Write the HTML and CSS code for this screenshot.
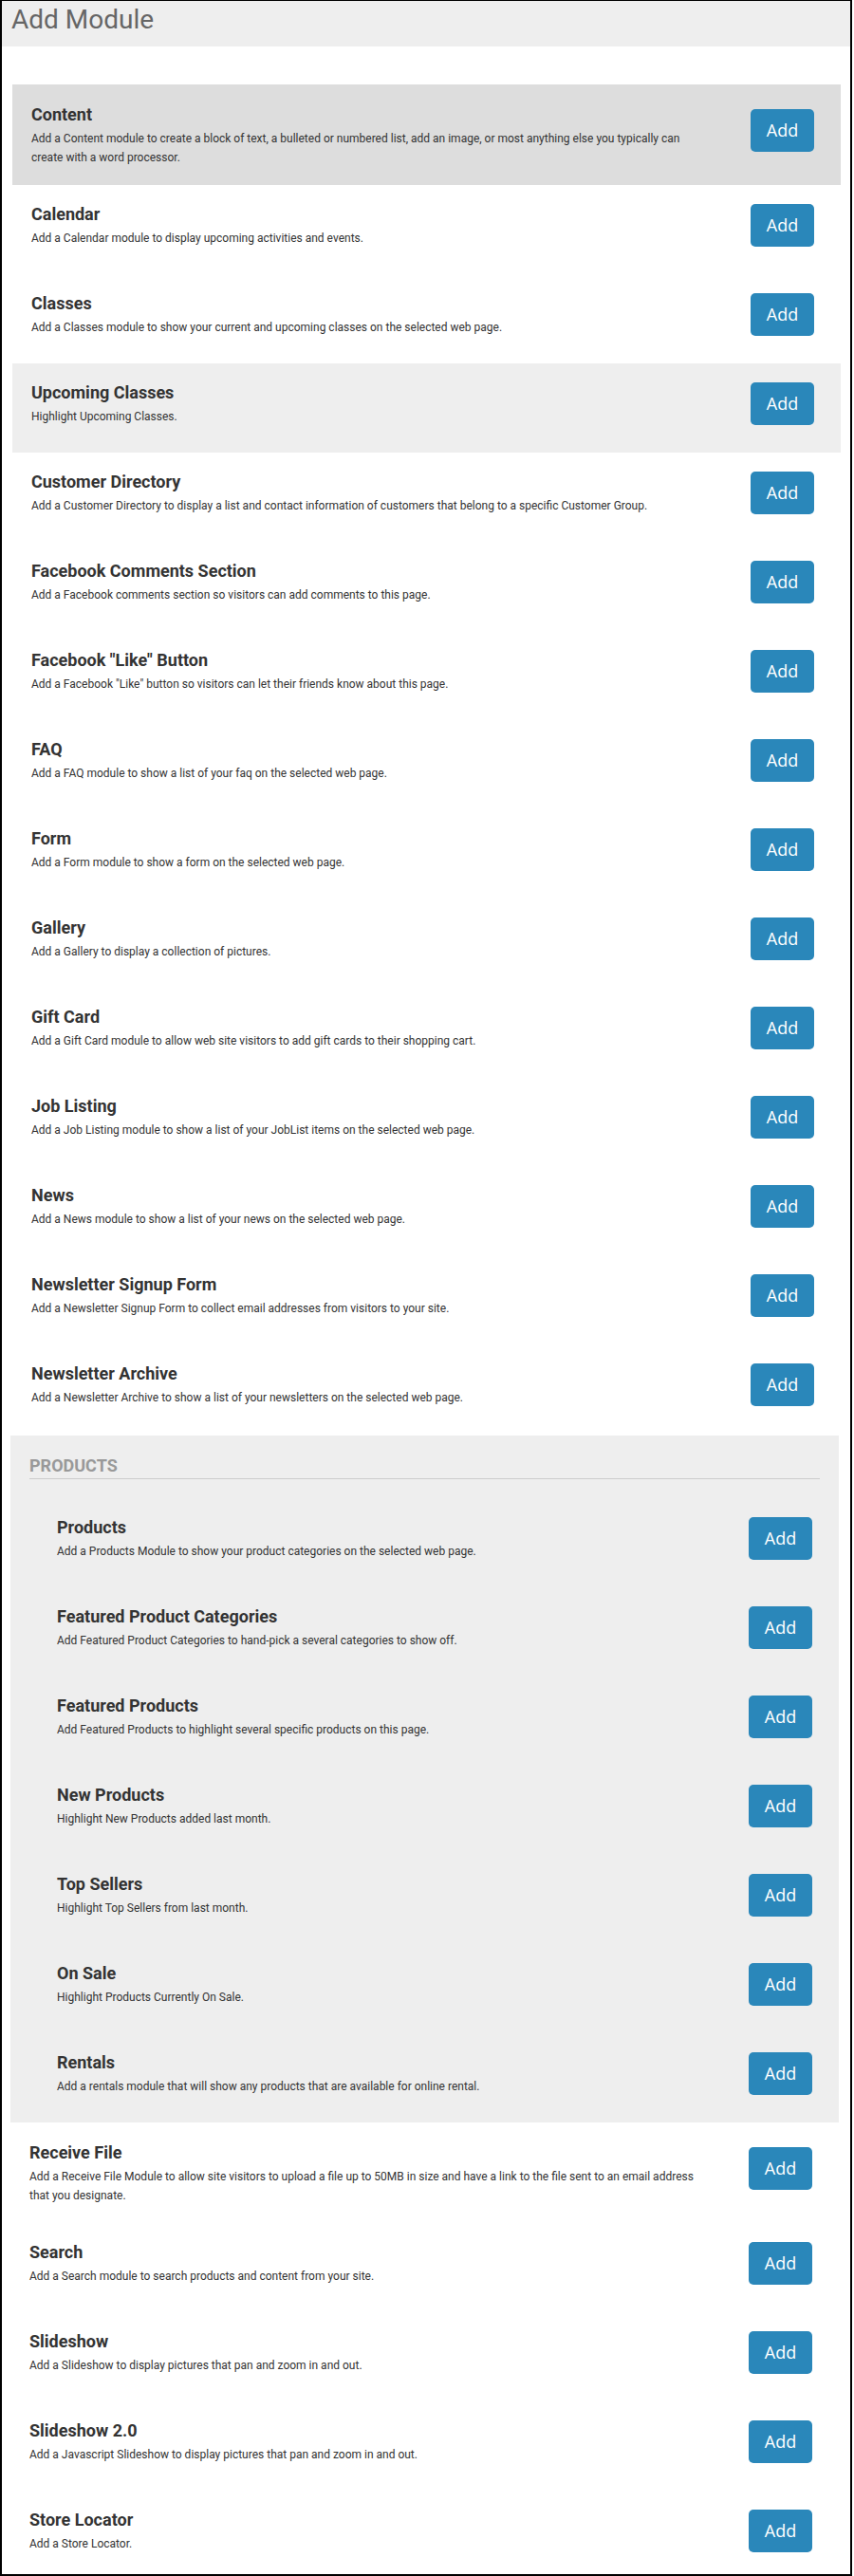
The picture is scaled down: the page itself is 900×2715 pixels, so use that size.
FILE: index.html
```html
<!DOCTYPE html>
<html lang="en">
<head>
<meta charset="utf-8">
<title>Add Module</title>
<link rel="stylesheet" href="styles.css">
</head>
<body>
<div class="frame">
  <header class="head"><h1 class="head-title">Add Module</h1></header>
  <main class="body">
    <div class="group">
      <div class="row row-dark row-tall">
        <div class="row-text">
          <h3 class="row-title">Content</h3>
          <p class="row-desc">Add a Content module to create a block of text, a bulleted or numbered list, add an image, or most anything else you typically can create with a word processor.</p>
        </div>
        <button class="add-btn">Add</button>
      </div>
      <div class="row">
        <div class="row-text"><h3 class="row-title">Calendar</h3><p class="row-desc">Add a Calendar module to display upcoming activities and events.</p></div>
        <button class="add-btn">Add</button>
      </div>
      <div class="row">
        <div class="row-text"><h3 class="row-title">Classes</h3><p class="row-desc">Add a Classes module to show your current and upcoming classes on the selected web page.</p></div>
        <button class="add-btn">Add</button>
      </div>
      <div class="row row-light">
        <div class="row-text"><h3 class="row-title">Upcoming Classes</h3><p class="row-desc">Highlight Upcoming Classes.</p></div>
        <button class="add-btn">Add</button>
      </div>
      <div class="row">
        <div class="row-text"><h3 class="row-title">Customer Directory</h3><p class="row-desc">Add a Customer Directory to display a list and contact information of customers that belong to a specific Customer Group.</p></div>
        <button class="add-btn">Add</button>
      </div>
      <div class="row">
        <div class="row-text"><h3 class="row-title">Facebook Comments Section</h3><p class="row-desc">Add a Facebook comments section so visitors can add comments to this page.</p></div>
        <button class="add-btn">Add</button>
      </div>
      <div class="row">
        <div class="row-text"><h3 class="row-title">Facebook "Like" Button</h3><p class="row-desc">Add a Facebook "Like" button so visitors can let their friends know about this page.</p></div>
        <button class="add-btn">Add</button>
      </div>
      <div class="row">
        <div class="row-text"><h3 class="row-title">FAQ</h3><p class="row-desc">Add a FAQ module to show a list of your faq on the selected web page.</p></div>
        <button class="add-btn">Add</button>
      </div>
      <div class="row">
        <div class="row-text"><h3 class="row-title">Form</h3><p class="row-desc">Add a Form module to show a form on the selected web page.</p></div>
        <button class="add-btn">Add</button>
      </div>
      <div class="row">
        <div class="row-text"><h3 class="row-title">Gallery</h3><p class="row-desc">Add a Gallery to display a collection of pictures.</p></div>
        <button class="add-btn">Add</button>
      </div>
      <div class="row">
        <div class="row-text"><h3 class="row-title">Gift Card</h3><p class="row-desc">Add a Gift Card module to allow web site visitors to add gift cards to their shopping cart.</p></div>
        <button class="add-btn">Add</button>
      </div>
      <div class="row">
        <div class="row-text"><h3 class="row-title">Job Listing</h3><p class="row-desc">Add a Job Listing module to show a list of your JobList items on the selected web page.</p></div>
        <button class="add-btn">Add</button>
      </div>
      <div class="row">
        <div class="row-text"><h3 class="row-title">News</h3><p class="row-desc">Add a News module to show a list of your news on the selected web page.</p></div>
        <button class="add-btn">Add</button>
      </div>
      <div class="row">
        <div class="row-text"><h3 class="row-title">Newsletter Signup Form</h3><p class="row-desc">Add a Newsletter Signup Form to collect email addresses from visitors to your site.</p></div>
        <button class="add-btn">Add</button>
      </div>
      <div class="row">
        <div class="row-text"><h3 class="row-title">Newsletter Archive</h3><p class="row-desc">Add a Newsletter Archive to show a list of your newsletters on the selected web page.</p></div>
        <button class="add-btn">Add</button>
      </div>
    </div>

    <div class="lower">
      <section class="products">
        <h2 class="products-title">PRODUCTS</h2>
        <div class="row row-nested">
          <div class="row-text"><h3 class="row-title">Products</h3><p class="row-desc">Add a Products Module to show your product categories on the selected web page.</p></div>
          <button class="add-btn">Add</button>
        </div>
        <div class="row row-nested">
          <div class="row-text"><h3 class="row-title">Featured Product Categories</h3><p class="row-desc">Add Featured Product Categories to hand-pick a several categories to show off.</p></div>
          <button class="add-btn">Add</button>
        </div>
        <div class="row row-nested">
          <div class="row-text"><h3 class="row-title">Featured Products</h3><p class="row-desc">Add Featured Products to highlight several specific products on this page.</p></div>
          <button class="add-btn">Add</button>
        </div>
        <div class="row row-nested">
          <div class="row-text"><h3 class="row-title">New Products</h3><p class="row-desc">Highlight New Products added last month.</p></div>
          <button class="add-btn">Add</button>
        </div>
        <div class="row row-nested">
          <div class="row-text"><h3 class="row-title">Top Sellers</h3><p class="row-desc">Highlight Top Sellers from last month.</p></div>
          <button class="add-btn">Add</button>
        </div>
        <div class="row row-nested">
          <div class="row-text"><h3 class="row-title">On Sale</h3><p class="row-desc">Highlight Products Currently On Sale.</p></div>
          <button class="add-btn">Add</button>
        </div>
        <div class="row row-nested">
          <div class="row-text"><h3 class="row-title">Rentals</h3><p class="row-desc">Add a rentals module that will show any products that are available for online rental.</p></div>
          <button class="add-btn">Add</button>
        </div>
      </section>

      <div class="row row-tall">
        <div class="row-text"><h3 class="row-title">Receive File</h3><p class="row-desc">Add a Receive File Module to allow site visitors to upload a file up to 50MB in size and have a link to the file sent to an email address that you designate.</p></div>
        <button class="add-btn">Add</button>
      </div>
      <div class="row">
        <div class="row-text"><h3 class="row-title">Search</h3><p class="row-desc">Add a Search module to search products and content from your site.</p></div>
        <button class="add-btn">Add</button>
      </div>
      <div class="row">
        <div class="row-text"><h3 class="row-title">Slideshow</h3><p class="row-desc">Add a Slideshow to display pictures that pan and zoom in and out.</p></div>
        <button class="add-btn">Add</button>
      </div>
      <div class="row">
        <div class="row-text"><h3 class="row-title">Slideshow 2.0</h3><p class="row-desc">Add a Javascript Slideshow to display pictures that pan and zoom in and out.</p></div>
        <button class="add-btn">Add</button>
      </div>
      <div class="row">
        <div class="row-text"><h3 class="row-title">Store Locator</h3><p class="row-desc">Add a Store Locator.</p></div>
        <button class="add-btn">Add</button>
      </div>
    </div>
  </main>
</div>
</body>
</html>
```

FILE: styles.css
```css
html, body {
  margin: 0;
  padding: 0;
  background: #fff;
}

body {
  font-family: Roboto, "Liberation Sans", Arial, sans-serif;
  color: #333;
}

.frame {
  box-sizing: border-box;
  width: 898px;
  height: 100vh;
  overflow: hidden;
  border-top: 1px solid #000;
  border-left: 2px solid #000;
  border-right: 2px solid #000;
  border-bottom: 2px solid #000;
  background: #fff;
}

.head {
  box-sizing: border-box;
  height: 48px;
  padding: 3px 10px 0;
  background: #eee;
}

.head-title {
  margin: 0;
  font-size: 28px;
  line-height: 33px;
  font-weight: 400;
  color: #666;
}

.body {
  padding: 40px 10px 0 11px;
}

.row {
  display: flex;
  align-items: flex-start;
  gap: 45px;
  padding: 20px 28px 28px 20px;
}

.row-tall {
  padding-top: 21px;
  padding-bottom: 19px;
}

.row-tall .add-btn {
  margin-top: 5px;
}

.row-dark {
  background: #ddd;
}

.row-light {
  background: #eee;
}

.row-text {
  flex: 1;
  min-width: 0;
}

.row-title {
  margin: 0;
  font-size: 18px;
  line-height: 22px;
  font-weight: 700;
  color: #333;
}

.row-desc {
  margin: 4px 0 0;
  font-size: 12px;
  line-height: 20px;
  color: #333;
}

.add-btn {
  flex-shrink: 0;
  width: 67px;
  height: 45px;
  padding: 0;
  border: none;
  border-radius: 5px;
  background: #2a87ba;
  color: #fff;
  font-family: "Open Sans", "DejaVu Sans", sans-serif;
  font-size: 18px;
  line-height: 45px;
  text-align: center;
}

.lower {
  margin: 2px 2px 0 -2px;
}

.products {
  background: #eee;
  padding-top: 21px;
}

.products-title {
  margin: 0 20px 20px;
  padding-bottom: 2px;
  border-bottom: 1px solid #ccc;
  font-size: 18px;
  line-height: 22px;
  font-weight: 700;
  color: #999;
}

.row-nested {
  padding-left: 49px;
}
```
